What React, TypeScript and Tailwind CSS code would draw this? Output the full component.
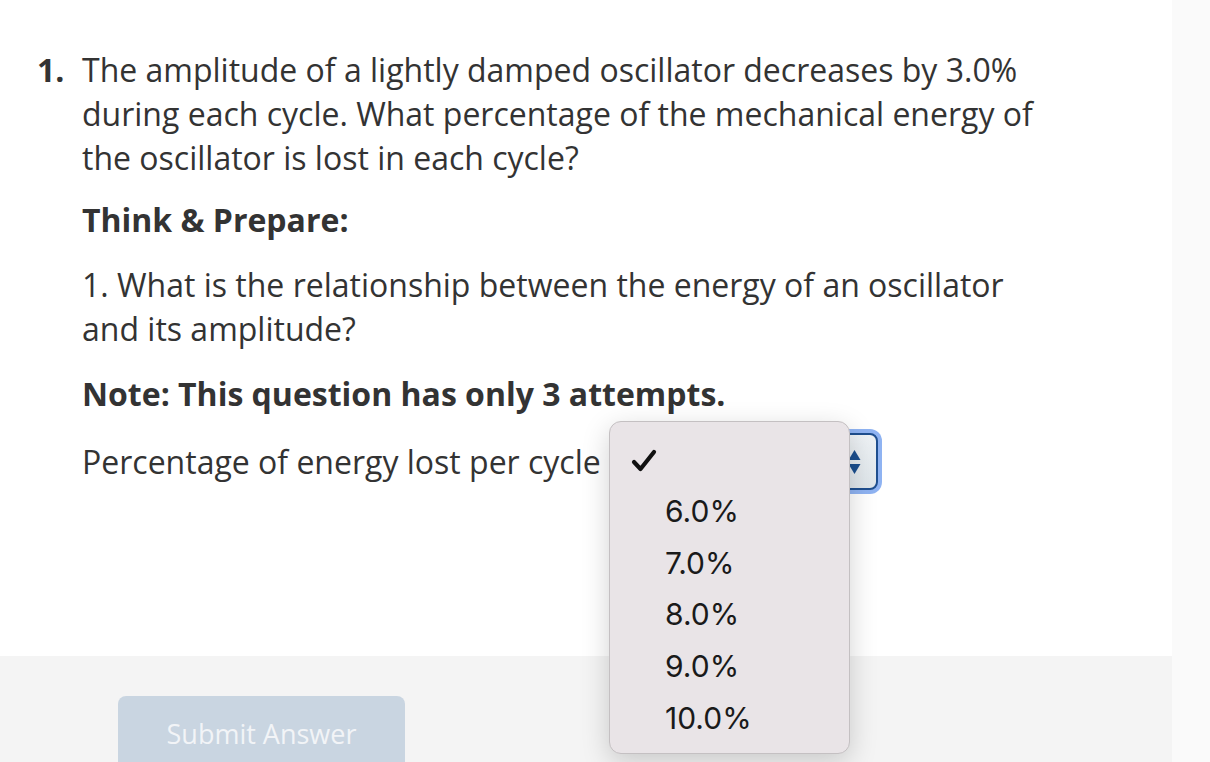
import React from "react";

const sans = { fontFamily: '"Open Sans", sans-serif' };

export default function App() {
  return (
    <div className="flex w-full h-[762px] overflow-hidden bg-white" style={sans}>
      <main className="w-[1172px] shrink-0 flex flex-col bg-white">
        <div className="flex-1 relative pt-[48px] text-[#333333]">
          <div className="flex">
            <div className="w-[82px] shrink-0 pl-[37px] text-[32px] leading-[44px] font-bold">1.</div>
            <div className="flex-1">
              <p className="text-[32px] leading-[44px] w-[958px]">
                The amplitude of a lightly damped oscillator decreases by 3.0% during each cycle. What percentage of the mechanical energy of the oscillator is lost in each cycle?
              </p>
              <p className="mt-[18px] text-[32px] leading-[44px] font-bold">Think &amp; Prepare:</p>
              <p className="mt-[21px] text-[32px] leading-[44px] w-[958px]">
                1. What is the relationship between the energy of an oscillator and its amplitude?
              </p>
              <p className="mt-[21px] text-[32px] leading-[44px] font-bold">Note: This question has only 3 attempts.</p>
              <div className="mt-[13px] flex items-center h-[65px]">
                <span className="text-[32px] leading-[44px] shrink-0">Percentage of energy lost per cycle</span>
                <div className="ml-[10px] shrink-0 w-[271px] h-[65px] rounded-[12px] bg-[#8fb3f2] p-[4px]">
                  <div className="w-full h-full rounded-[8px] border-2 border-[#1f4f8f] bg-gradient-to-b from-[#eef2f5] to-[#dfe6ea] flex items-center justify-end pr-[15px]">
                    <svg width="13" height="26" viewBox="0 0 13 26">
                      <path d="M6.5 1 L12.5 11 L0.5 11 Z" fill="#1b4f8e" />
                      <path d="M6.5 25 L12.5 15 L0.5 15 Z" fill="#1b4f8e" />
                    </svg>
                  </div>
                </div>
              </div>
            </div>
          </div>

          <div
            className="absolute left-[609px] top-[421px] w-[241px] h-[333px] rounded-[12px] border border-[#c4c0c2] bg-[#e9e4e7] shadow-[0_8px_28px_rgba(0,0,0,0.18)] z-10"
            style={{ fontFamily: 'Inter, "Liberation Sans", sans-serif' }}
          >
            <div className="relative pt-[13px] text-[#1a1a1a]">
              <div className="h-[51px] flex items-center pl-[20px]">
                <svg width="28" height="24" viewBox="0 0 28 24">
                  <path d="M4 13 L10.5 20 L24 3" fill="none" stroke="#111111" strokeWidth="4.2" strokeLinecap="round" strokeLinejoin="round" />
                </svg>
              </div>
              {["6.0%", "7.0%", "8.0%", "9.0%", "10.0%"].map((o) => (
                <div key={o} className="h-[51.6px] flex items-center pl-[55px] text-[30px]">
                  {o}
                </div>
              ))}
            </div>
          </div>
        </div>
        <footer className="h-[106px] bg-[#f4f4f4] pt-[40px] pl-[118px]">
          <button className="w-[287px] h-[80px] rounded-[8px] bg-[#c9d5e1] text-[#f2f4f7] text-[27px] pb-[4px]" style={sans}>
            Submit Answer
          </button>
        </footer>
      </main>
      <aside className="flex-1 bg-[#fafafa]" />
    </div>
  );
}
